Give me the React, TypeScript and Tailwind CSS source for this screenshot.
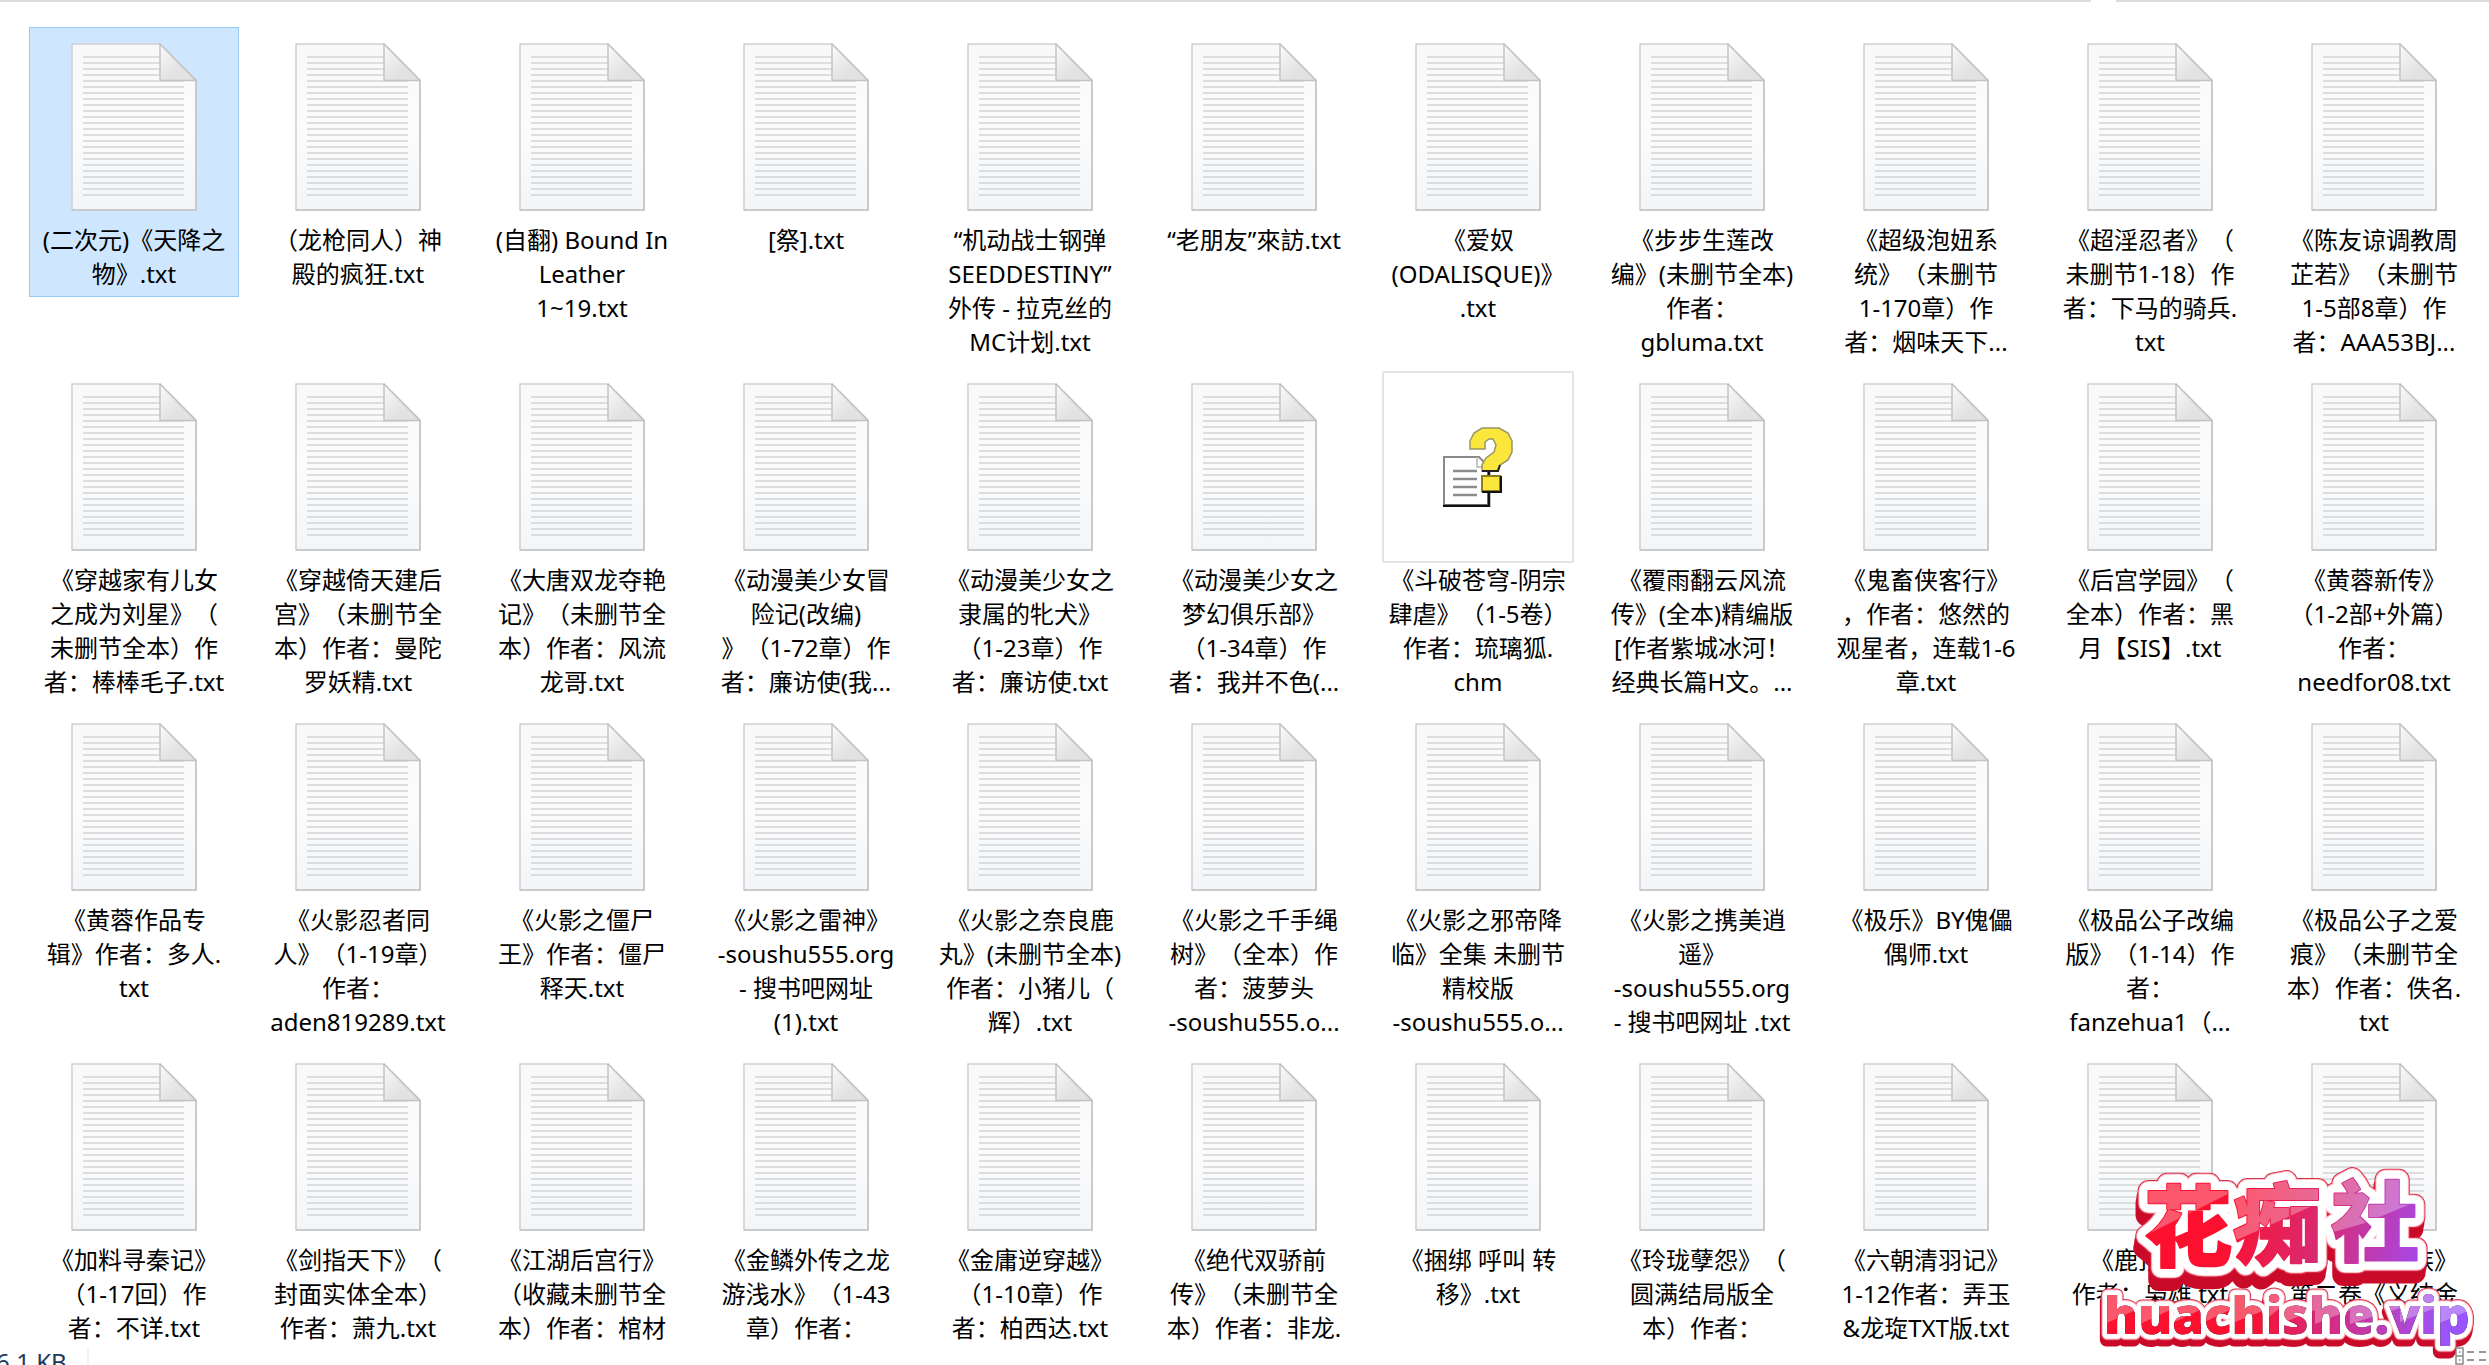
import { clsx } from 'clsx';

type FileItem = {
  lines: string[];
  kind?: 'chm';
  selected?: boolean;
};

const files: FileItem[] = [
  { lines: ['(二次元)《天降之', '物》.txt'], selected: true },
  { lines: ['（龙枪同人）神', '殿的疯狂.txt'] },
  { lines: ['(自翻) Bound In', 'Leather', '1~19.txt'] },
  { lines: ['[祭].txt'] },
  { lines: ['“机动战士钢弹', 'SEEDDESTINY”', '外传 - 拉克丝的', 'MC计划.txt'] },
  { lines: ['“老朋友”來訪.txt'] },
  { lines: ['《爱奴', '(ODALISQUE)》', '.txt'] },
  { lines: ['《步步生莲改', '编》(未删节全本)', '作者：', 'gbluma.txt'] },
  { lines: ['《超级泡妞系', '统》（未删节', '1-170章）作', '者：烟味天下...'] },
  { lines: ['《超淫忍者》（', '未删节1-18）作', '者：下马的骑兵.', 'txt'] },
  { lines: ['《陈友谅调教周', '芷若》（未删节', '1-5部8章）作', '者：AAA53BJ...'] },

  { lines: ['《穿越家有儿女', '之成为刘星》（', '未删节全本）作', '者：棒棒毛子.txt'] },
  { lines: ['《穿越倚天建后', '宫》（未删节全', '本）作者：曼陀', '罗妖精.txt'] },
  { lines: ['《大唐双龙夺艳', '记》（未删节全', '本）作者：风流', '龙哥.txt'] },
  { lines: ['《动漫美少女冒', '险记(改编)', '》（1-72章）作', '者：廉访使(我...'] },
  { lines: ['《动漫美少女之', '隶属的牝犬》', '（1-23章）作', '者：廉访使.txt'] },
  { lines: ['《动漫美少女之', '梦幻俱乐部》', '（1-34章）作', '者：我并不色(...'] },
  { lines: ['《斗破苍穹-阴宗', '肆虐》（1-5卷）', '作者：琉璃狐.', 'chm'], kind: 'chm' },
  { lines: ['《覆雨翻云风流', '传》(全本)精编版', '[作者紫城冰河！', '经典长篇H文。...'] },
  { lines: ['《鬼畜侠客行》', '，作者：悠然的', '观星者，连载1-6', '章.txt'] },
  { lines: ['《后宫学园》（', '全本）作者：黑', '月【SIS】.txt'] },
  { lines: ['《黄蓉新传》', '（1-2部+外篇）', '作者：', 'needfor08.txt'] },

  { lines: ['《黄蓉作品专', '辑》作者：多人.', 'txt'] },
  { lines: ['《火影忍者同', '人》（1-19章）', '作者：', 'aden819289.txt'] },
  { lines: ['《火影之僵尸', '王》作者：僵尸', '释天.txt'] },
  { lines: ['《火影之雷神》', '-soushu555.org', '- 搜书吧网址', '(1).txt'] },
  { lines: ['《火影之奈良鹿', '丸》(未删节全本)', '作者：小猪儿（', '辉）.txt'] },
  { lines: ['《火影之千手绳', '树》（全本）作', '者：菠萝头', '-soushu555.o...'] },
  { lines: ['《火影之邪帝降', '临》全集 未删节', '精校版', '-soushu555.o...'] },
  { lines: ['《火影之携美逍', '遥》', '-soushu555.org', '- 搜书吧网址 .txt'] },
  { lines: ['《极乐》BY傀儡', '偶师.txt'] },
  { lines: ['《极品公子改编', '版》（1-14）作', '者：', 'fanzehua1（...'] },
  { lines: ['《极品公子之爱', '痕》（未删节全', '本）作者：佚名.', 'txt'] },

  { lines: ['《加料寻秦记》', '（1-17回）作', '者：不详.txt'] },
  { lines: ['《剑指天下》（', '封面实体全本）', '作者：萧九.txt'] },
  { lines: ['《江湖后宫行》', '（收藏未删节全', '本）作者：棺材'] },
  { lines: ['《金鳞外传之龙', '游浅水》（1-43', '章）作者：'] },
  { lines: ['《金庸逆穿越》', '（1-10章）作', '者：柏西达.txt'] },
  { lines: ['《绝代双骄前', '传》（未删节全', '本）作者：非龙.'] },
  { lines: ['《捆绑 呼叫 转', '移》.txt'] },
  { lines: ['《玲珑孽怨》（', '圆满结局版全', '本）作者：'] },
  { lines: ['《六朝清羽记》', '1-12作者：弄玉', '&龙琁TXT版.txt'] },
  { lines: ['《鹿顶记》　　', '作者：枭雄.txt'] },
  { lines: ['《　　　　族》', '第二卷《义结金'] },
];

const ruledLines = Array.from({ length: 24 }, (_, i) => i);

function TextFileIcon() {
  return (
    <svg className="w-[126px] h-[168px]" viewBox="0 0 126 168" aria-hidden="true">
      <defs>
        <linearGradient id="paper" x1="0" y1="0" x2="0" y2="1">
          <stop offset="0" stopColor="#f8f8f8" />
          <stop offset="0.5" stopColor="#fcfcfc" />
          <stop offset="1" stopColor="#f3f5f8" />
        </linearGradient>
        <linearGradient id="fold" x1="0" y1="0" x2="1" y2="1">
          <stop offset="0" stopColor="#fbfbfb" />
          <stop offset="0.6" stopColor="#e2e2e2" />
        </linearGradient>
      </defs>
      <path d="M1 1H89L125 37V167H1Z" fill="url(#paper)" stroke="#cfd0d2" strokeWidth="1.5" />
      {ruledLines.map((i) => (
        <path key={i} d={`M12 ${14 + i * 6}H${i < 4 ? 89 : 113}`} stroke="#dcdddf" strokeWidth="2" />
      ))}
      <path d="M89 1V37.5H125Z" fill="url(#fold)" stroke="#c3c3c3" strokeWidth="1.5" strokeLinejoin="round" />
      <path d="M125 37V167H1" fill="none" stroke="#c4c5c7" strokeWidth="1.5" />
    </svg>
  );
}

function HelpFileIcon() {
  return (
    <svg className="w-[72px] h-[80px]" viewBox="0 0 72 80" aria-hidden="true">
      <path d="M2 30H37L46 39V78H2Z" fill="#fff" stroke="#8a8a8a" strokeWidth="2" />
      <path d="M1 79H47V44" fill="none" stroke="#111" strokeWidth="2.5" />
      <path d="M11 44H35M11 52H35M11 60H35M11 68H35" stroke="#8c8c8c" strokeWidth="2.5" />
      <path d="M35 30V40H42" fill="none" stroke="#b5b5b5" strokeWidth="1.5" />
      <path
        d="M28 22V14L32 6L40 1H57L66 6L70 14V25L66 33L58 38L55 44H40V38L44 31L52 25L54 18L51 12H47L43 15V22Z"
        fill="#fbe63c"
        stroke="#9b9464"
        strokeWidth="1.5"
      />
      <path d="M40 44H56L58 38" fill="none" stroke="#222" strokeWidth="2" />
      <path d="M40 49H58V64H40Z" fill="#fbe63c" stroke="#8d7f1c" strokeWidth="2" />
      <path d="M40 65H59V49" fill="none" stroke="#111" strokeWidth="2" />
    </svg>
  );
}

function FileTile({ file }: { file: FileItem }) {
  return (
    <li className="px-[7px]">
      <button
        type="button"
        className={clsx(
          'flex w-full flex-col items-center border px-0 pt-[3px] pb-[5px]',
          file.selected ? 'border-[#99c9f7] bg-[#cfe6ff]' : 'border-transparent'
        )}
      >
        {file.kind === 'chm' ? (
          <span className="flex size-48 items-center justify-center rounded-xs border-2 border-[#e4e4e4] bg-white">
            <HelpFileIcon />
          </span>
        ) : (
          <span className="flex size-48 items-center justify-center">
            <TextFileIcon />
          </span>
        )}
        <span className="text-center text-2xl/[34px] whitespace-nowrap text-black">
          {file.lines.map((line, i) => (
            <span key={i} className="block">
              {line}
            </span>
          ))}
        </span>
      </button>
    </li>
  );
}

function StatusBar() {
  return (
    <footer className="flex h-5 shrink-0 items-start justify-between overflow-hidden bg-white">
      <div className="flex h-full items-start">
        <span className="-ml-1 pt-0.5 pr-5 text-2xl/[30px] text-[#1e395b]">6.1 KB</span>
        <span className="mt-1 h-full w-0.5 bg-[#f0f0f0]" />
      </div>
      {/* details view toggle */}
      <button type="button" aria-label="详细信息" className="pt-0.5 pr-0.5">
        <svg className="h-[18px] w-8" viewBox="0 0 32 18" aria-hidden="true">
          <path d="M1 1H8V9H1ZM1 9H8V17H1Z" fill="#fff" stroke="#8a8a8a" strokeWidth="1.5" />
          <path d="M4 5H5.5M4 13H5.5" stroke="#5a86b5" strokeWidth="1.5" />
          <path d="M12 5H19M24 5H31M12 13H19M24 13H31" stroke="#777" strokeWidth="1.5" />
        </svg>
      </button>
    </footer>
  );
}

function SiteBadge() {
  return (
    <svg
      className="pointer-events-none absolute right-0 bottom-0 h-[215px] w-[409px] font-['Noto_Sans_CJK_SC',sans-serif] font-black"
      viewBox="0 0 409 215"
      role="img"
      aria-label="花痴社 huachishe.vip"
    >
      <defs>
        <linearGradient id="badgeTitle" gradientUnits="userSpaceOnUse" x1="150" y1="60" x2="350" y2="110">
          <stop offset="0" stopColor="#fb112f" />
          <stop offset="0.45" stopColor="#d92a72" />
          <stop offset="1" stopColor="#a04cf5" />
        </linearGradient>
        <linearGradient id="badgeDomain" gradientUnits="userSpaceOnUse" x1="170" y1="0" x2="370" y2="0">
          <stop offset="0" stopColor="#fb112f" />
          <stop offset="0.5" stopColor="#cb329a" />
          <stop offset="1" stopColor="#9a55ff" />
        </linearGradient>
        <mask id="titleMask" maskUnits="userSpaceOnUse" x="0" y="0" width="409" height="215">
          <use href="#title" fill="#fff" />
        </mask>
        <mask id="domainMask" maskUnits="userSpaceOnUse" x="0" y="0" width="409" height="215">
          <use href="#domain" fill="#fff" />
        </mask>
      </defs>

      {/* outlines are stacked from the widest to the narrowest */}
      <g strokeLinejoin="round">
        <use href="#title" fill="#c90b29" stroke="#c90b29" strokeWidth="22" transform="translate(-2 12)" />
        <use href="#title" fill="#c90b29" stroke="#c90b29" strokeWidth="22" transform="translate(-1 6)" />
        <use href="#title" fill="#d9304a" stroke="#d9304a" strokeWidth="22" />
        <use href="#title" fill="#ffc3cc" stroke="#ffc3cc" strokeWidth="20" />
        <use href="#title" fill="#fff" stroke="#fff" strokeWidth="18" />
        <g id="title" fontSize="88">
          <text x="64" y="109">花</text>
          <text x="153" y="107">痴</text>
          <text x="251" y="104">社</text>
        </g>
        <use href="#title" fill="url(#badgeTitle)" stroke="url(#badgeTitle)" strokeWidth="2" />
        <path
          d="M60 20H345V48L285 73L250 83V48L150 93V43L60 88Z"
          fill="#fff"
          fillOpacity="0.3"
          mask="url(#titleMask)"
        />

        <use href="#domain" fill="#c90b29" stroke="#c90b29" strokeWidth="13" transform="translate(-1 6)" />
        <use href="#domain" fill="#d9304a" stroke="#d9304a" strokeWidth="13" />
        <use href="#domain" fill="#ffc3cc" stroke="#ffc3cc" strokeWidth="11" />
        <use href="#domain" fill="#fff" stroke="#fff" strokeWidth="9" />
        <text id="domain" x="24" y="184" fontSize="51" className="font-['Open_Sans','Noto_Sans',sans-serif]">
          huachishe.vip
        </text>
        <use href="#domain" fill="url(#badgeDomain)" />
        <path
          d="M20 140H390V160L355 175V158L320 172V158L270 174V160L235 174V160L200 174V158L185 170V160L150 174V160L120 174V160L90 174V160L60 174V158L20 176Z"
          fill="#fff"
          fillOpacity="0.3"
          mask="url(#domainMask)"
        />
      </g>
    </svg>
  );
}

export default function App() {
  return (
    <div className="relative flex h-screen flex-col overflow-hidden bg-white font-['Noto_Sans','Noto_Sans_CJK_SC',sans-serif] [text-spacing-trim:space-all]">
      {/* bottom edge of the column header */}
      <div className="flex h-[27px] shrink-0 items-start gap-[25px]">
        <span className="h-0.5 grow bg-[#dcdcdc]" />
        <span className="h-0.5 w-[15%] bg-[#dcdcdc]" />
      </div>
      <main className="min-h-0 grow overflow-hidden pr-[3px] pl-[22px]">
        <ul className="grid auto-rows-[340px] grid-cols-11">
          {files.map((file, i) => (
            <FileTile key={i} file={file} />
          ))}
        </ul>
      </main>
      <StatusBar />
      <SiteBadge />
    </div>
  );
}
